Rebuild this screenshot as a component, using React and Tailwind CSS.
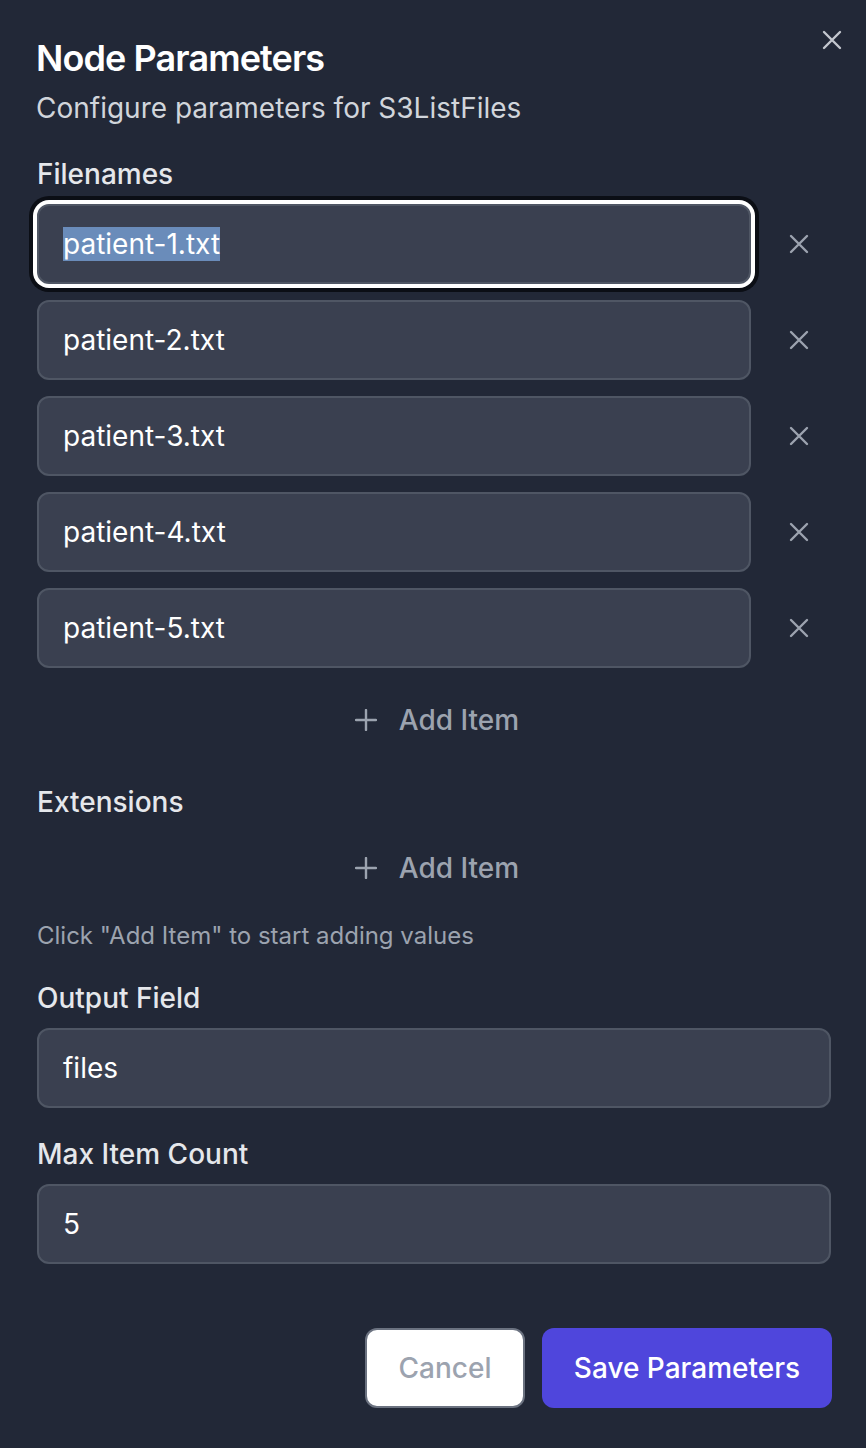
import React from "react";

const files = ["patient-1.txt", "patient-2.txt", "patient-3.txt", "patient-4.txt", "patient-5.txt"];

/* Small stroke icons */
const XIcon = ({ size = 20, className = "" }) => (
    <svg width={size} height={size} viewBox="0 0 20 20" fill="none" className={className}>
        <path d="M2 2L18 18M18 2L2 18" stroke="currentColor" strokeWidth="2.4" strokeLinecap="round" />
    </svg>
);

const PlusIcon = () => (
    <svg width="22" height="22" viewBox="0 0 22 22" fill="none">
        <path d="M11 1V21M1 11H21" stroke="currentColor" strokeWidth="2.4" strokeLinecap="round" />
    </svg>
);

function AddItem() {
    return (
        <button className="flex h-[56px] w-full items-center justify-center gap-[22px] pl-[6px] text-[28px] font-medium text-[#9ca3af]">
            <PlusIcon />
            <span>Add Item</span>
        </button>
    );
}

function Field({ value, focused }) {
    return (
        <div
            className={`flex h-[80px] items-center rounded-[12px] border-2 border-[#4f5664] bg-[#3a4050] px-[24px] text-[28px] text-white ${
                focused ? "shadow-[0_0_0_4px_#ffffff,0_0_0_8px_#0b0e15]" : ""
            }`}
        >
            {focused ? <span className="bg-[#6a8cba] leading-[34px]">{value}</span> : value}
        </div>
    );
}

export default function App() {
    return (
        <div className="relative min-h-[1448px] bg-[#222837] pl-[37px] pr-[35px] pt-[30px] font-['Inter',sans-serif]">
            {/* Close */}
            <button className="absolute right-[24px] top-[30px] text-[#c3c7ce]">
                <XIcon size={20} />
            </button>

            {/* Header */}
            <h2 className="-ml-px text-[36px] font-semibold leading-[56px] tracking-tight text-white">
                Node Parameters
            </h2>
            <p className="-ml-px mt-[2px] text-[28px] leading-[40px] text-[#d1d5db]">
                Configure parameters for S3ListFiles
            </p>

            {/* Filenames */}
            <label className="mt-[26px] block text-[28px] font-medium leading-[40px] text-[#e5e7eb]">
                Filenames
            </label>
            <div className="mt-[10px] flex flex-col gap-[16px]">
                {files.map((f, i) => (
                    <div key={f} className="flex items-center gap-[16px]">
                        <div className="w-[714px]">
                            <Field value={f} focused={i === 0} />
                        </div>
                        <button className="flex w-[64px] justify-center text-[#9ca3af]">
                            <XIcon size={20} />
                        </button>
                    </div>
                ))}
            </div>
            <div className="mt-[24px]">
                <AddItem />
            </div>

            {/* Extensions */}
            <label className="mt-[34px] block text-[28px] font-medium leading-[40px] text-[#e5e7eb]">
                Extensions
            </label>
            <div className="mt-[18px]">
                <AddItem />
            </div>
            <p className="mt-[24px] text-[24px] leading-[32px] text-[#9ca3af]">
                Click "Add Item" to start adding values
            </p>

            {/* Output Field */}
            <label className="mt-[26px] block text-[28px] font-medium leading-[40px] text-[#e5e7eb]">
                Output Field
            </label>
            <div className="mt-[10px]">
                <Field value="files" />
            </div>

            {/* Max Item Count */}
            <label className="mt-[26px] block text-[28px] font-medium leading-[40px] text-[#e5e7eb]">
                Max Item Count
            </label>
            <div className="mt-[10px]">
                <Field value="5" />
            </div>

            {/* Footer */}
            <div className="-mr-px mt-[64px] flex justify-end gap-[17px]">
                <button className="h-[80px] w-[160px] rounded-[12px] border-2 border-[#6b7280] bg-white text-[28px] font-medium text-[#9ca3af]">
                    Cancel
                </button>
                <button className="h-[80px] w-[290px] rounded-[12px] bg-[#4f46dc] text-[28px] font-medium text-white">
                    Save Parameters
                </button>
            </div>
        </div>
    );
}
